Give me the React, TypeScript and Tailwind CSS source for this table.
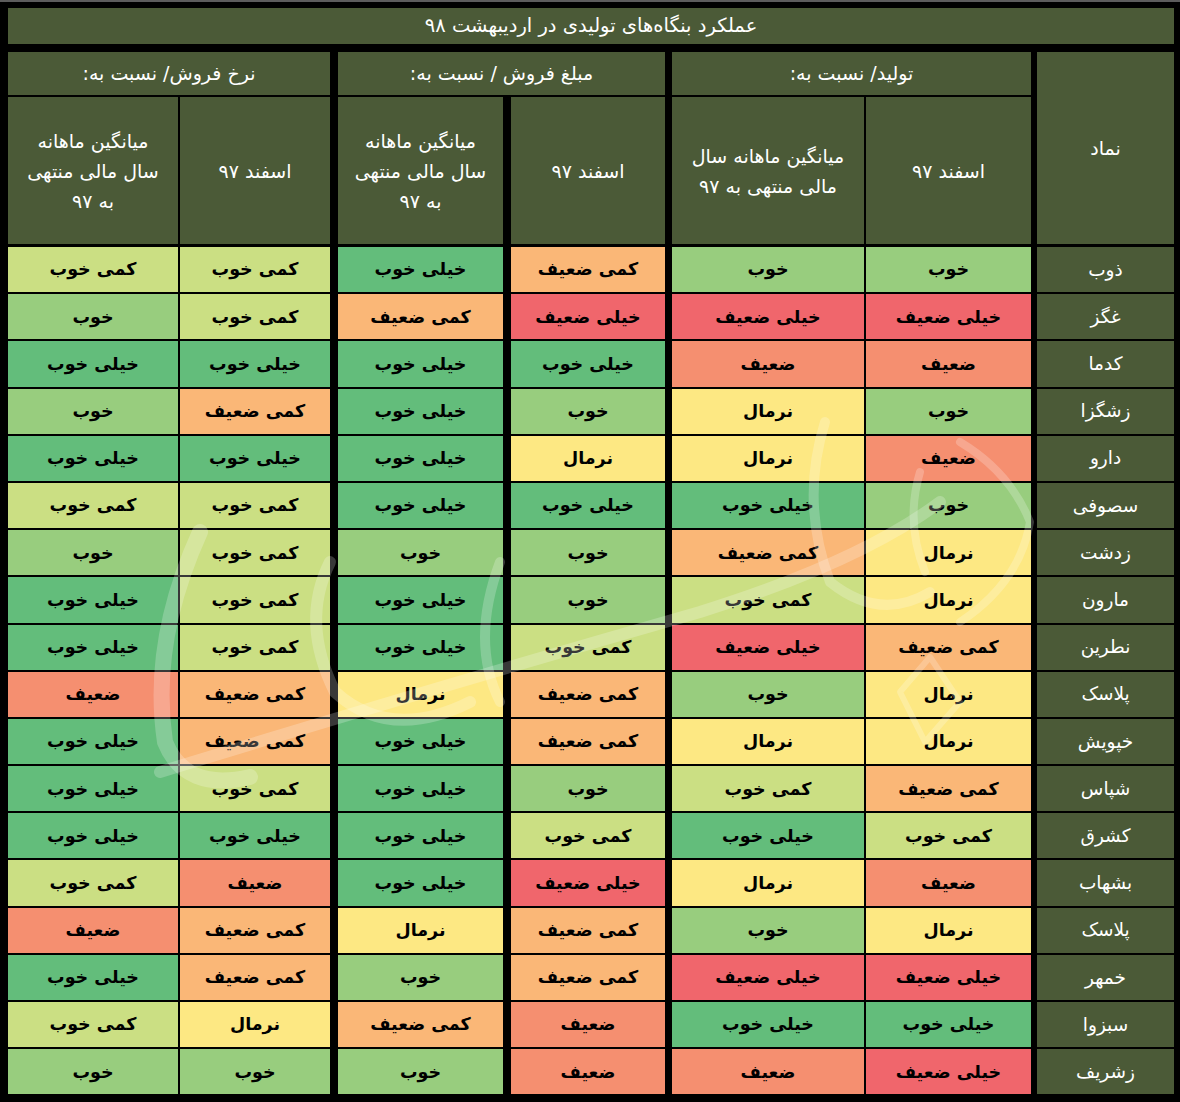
import React from 'react';

type Level = 'خیلی خوب' | 'خوب' | 'کمی خوب' | 'نرمال' | 'کمی ضعیف' | 'ضعیف' | 'خیلی ضعیف';

const levelColors: Record<Level, string> = {
  'خیلی خوب': 'bg-[#63bd7b]',
  'خوب': 'bg-[#98cd7e]',
  'کمی خوب': 'bg-[#cbdf83]',
  'نرمال': 'bg-[#fde883]',
  'کمی ضعیف': 'bg-[#fab777]',
  'ضعیف': 'bg-[#f58f70]',
  'خیلی ضعیف': 'bg-[#f0666c]',
};

// value columns, right to left: تولید (اسفند، میانگین) / مبلغ فروش (اسفند، میانگین) / نرخ فروش (اسفند، میانگین)
const cols = [
  { w: 'w-[165px]', gap: 'ml-[2px]' },
  { w: 'w-[192px]', gap: 'ml-[7px]' },
  { w: 'w-[154px]', gap: 'ml-[8px]' },
  { w: 'w-[165px]', gap: 'ml-[8px]' },
  { w: 'w-[150px]', gap: 'ml-[2px]' },
  { w: 'w-[170px]', gap: '' },
];

const rows: [string, Level[]][] = [
  ['ذوب', ['خوب', 'خوب', 'کمی ضعیف', 'خیلی خوب', 'کمی خوب', 'کمی خوب']],
  ['غگز', ['خیلی ضعیف', 'خیلی ضعیف', 'خیلی ضعیف', 'کمی ضعیف', 'کمی خوب', 'خوب']],
  ['کدما', ['ضعیف', 'ضعیف', 'خیلی خوب', 'خیلی خوب', 'خیلی خوب', 'خیلی خوب']],
  ['زشگزا', ['خوب', 'نرمال', 'خوب', 'خیلی خوب', 'کمی ضعیف', 'خوب']],
  ['دارو', ['ضعیف', 'نرمال', 'نرمال', 'خیلی خوب', 'خیلی خوب', 'خیلی خوب']],
  ['سصوفی', ['خوب', 'خیلی خوب', 'خیلی خوب', 'خیلی خوب', 'کمی خوب', 'کمی خوب']],
  ['زدشت', ['نرمال', 'کمی ضعیف', 'خوب', 'خوب', 'کمی خوب', 'خوب']],
  ['مارون', ['نرمال', 'کمی خوب', 'خوب', 'خیلی خوب', 'کمی خوب', 'خیلی خوب']],
  ['نطرین', ['کمی ضعیف', 'خیلی ضعیف', 'کمی خوب', 'خیلی خوب', 'کمی خوب', 'خیلی خوب']],
  ['پلاسک', ['نرمال', 'خوب', 'کمی ضعیف', 'نرمال', 'کمی ضعیف', 'ضعیف']],
  ['خپویش', ['نرمال', 'نرمال', 'کمی ضعیف', 'خیلی خوب', 'کمی ضعیف', 'خیلی خوب']],
  ['شپاس', ['کمی ضعیف', 'کمی خوب', 'خوب', 'خیلی خوب', 'کمی خوب', 'خیلی خوب']],
  ['کشرق', ['کمی خوب', 'خیلی خوب', 'کمی خوب', 'خیلی خوب', 'خیلی خوب', 'خیلی خوب']],
  ['بشهاب', ['ضعیف', 'نرمال', 'خیلی ضعیف', 'خیلی خوب', 'ضعیف', 'کمی خوب']],
  ['پلاسک', ['نرمال', 'خوب', 'کمی ضعیف', 'نرمال', 'کمی ضعیف', 'ضعیف']],
  ['خمهر', ['خیلی ضعیف', 'خیلی ضعیف', 'کمی ضعیف', 'خوب', 'کمی ضعیف', 'خیلی خوب']],
  ['سبزوا', ['خیلی خوب', 'خیلی خوب', 'ضعیف', 'کمی ضعیف', 'نرمال', 'کمی خوب']],
  ['زشریف', ['خیلی ضعیف', 'ضعیف', 'ضعیف', 'خوب', 'خوب', 'خوب']],
];

const olive = 'bg-[#4b5a37]';

function GroupHeader({
  title,
  right,
  left,
  width,
}: {
  title: string;
  right: [React.ReactNode, string, string];
  left: [React.ReactNode, string];
  width: string;
}) {
  return (
    <div className={`flex flex-col gap-[2px] ${width}`}>
      <div className={`flex h-[43px] items-center justify-center ${olive} text-[19px] text-white`}>
        {title}
      </div>
      <div className="flex flex-1">
        <div className={`flex items-center justify-center ${olive} ${right[1]} ${right[2]} text-center text-[19px] leading-[30px] text-white`}>
          {right[0]}
        </div>
        <div className={`flex items-center justify-center ${olive} ${left[1]} text-center text-[19px] leading-[30px] text-white`}>
          {left[0]}
        </div>
      </div>
    </div>
  );
}

function Watermark() {
  return (
    <svg
      className="pointer-events-none absolute left-0 top-0"
      width="1180"
      height="1102"
      viewBox="0 0 1180 1102"
      fill="none"
    >
      <g stroke="#ffffff" strokeOpacity="0.22" strokeLinecap="round" strokeLinejoin="round">
        <path d="M160 770 Q 420 690 700 610 Q 860 560 940 500" strokeWidth="12" />
        <path d="M200 530 Q 150 640 165 740 Q 185 790 250 775" strokeWidth="16" />
        <path d="M330 560 Q 300 620 335 690 Q 390 740 470 700" strokeWidth="12" />
        <path d="M500 560 Q 470 640 500 700" strokeWidth="10" />
        <path d="M825 420 Q 800 500 830 580 Q 880 620 930 590" strokeWidth="10" />
        <path d="M960 440 Q 1010 470 1030 520 Q 1020 580 960 620" strokeWidth="8" />
        <path d="M900 690 L 930 655 L 960 700 L 925 740 Z" strokeWidth="6" />
        <path d="M920 470 Q 905 520 925 570" strokeWidth="8" />
      </g>
    </svg>
  );
}

export default function App() {
  return (
    <div
      dir="rtl"
      className="relative w-[1180px] h-[1102px] overflow-hidden border-t-2 border-[#5c5c5c] bg-black pb-[8px] pl-[8px] pr-[6px] pt-[6px]"
      style={{ fontFamily: '"DejaVu Sans", "Noto Sans", sans-serif' }}
    >
      <div className={`flex h-[36px] items-center justify-center ${olive} text-[19.5px] text-white`}>
        عملکرد بنگاه‌های تولیدی در اردیبهشت ۹۸
      </div>

      <div className="mt-[8px] flex h-[192px]">
        <div className={`ml-[6px] flex w-[137px] items-center justify-center ${olive} text-[19px] text-white`}>
          نماد
        </div>
        <div className="ml-[7px] flex">
          <GroupHeader
            title="تولید/ نسبت به:"
            width="w-[359px]"
            right={['اسفند ۹۷', 'w-[165px]', 'ml-[2px]']}
            left={[
              <span>
                میانگین ماهانه سال
                <br />
                مالی منتهی به ۹۷
              </span>,
              'w-[192px]',
            ]}
          />
        </div>
        <div className="ml-[8px] flex">
          <GroupHeader
            title="مبلغ فروش / نسبت به:"
            width="w-[327px]"
            right={['اسفند ۹۷', 'w-[154px]', 'ml-[8px]']}
            left={[
              <span>
                میانگین ماهانه
                <br />
                سال مالی منتهی
                <br />
                به ۹۷
              </span>,
              'w-[165px]',
            ]}
          />
        </div>
        <GroupHeader
          title="نرخ فروش/ نسبت به:"
          width="w-[322px]"
          right={['اسفند ۹۷', 'w-[150px]', 'ml-[2px]']}
          left={[
            <span>
              میانگین ماهانه
              <br />
              سال مالی منتهی
              <br />
              به ۹۷
            </span>,
            'w-[170px]',
          ]}
        />
      </div>

      <div className="mt-[3px] flex flex-col gap-[2px]">
        {rows.map(([name, values], i) => (
          <div key={i} className="flex h-[45.2px]">
            <div className={`ml-[6px] flex w-[137px] items-center justify-center ${olive} text-[18.5px] text-white`}>
              {name}
            </div>
            {values.map((v, j) => (
              <div
                key={j}
                className={`flex items-center justify-center ${cols[j].w} ${cols[j].gap} ${levelColors[v]} text-[17.5px] font-bold text-black`}
              >
                {v}
              </div>
            ))}
          </div>
        ))}
      </div>

      <Watermark />
    </div>
  );
}
